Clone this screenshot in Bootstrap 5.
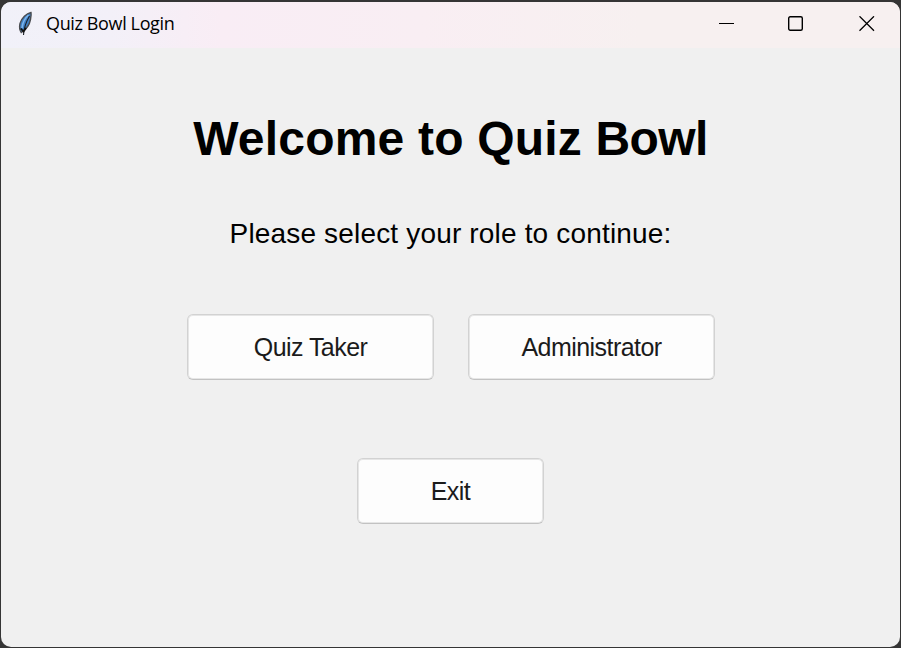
<!DOCTYPE html>
<html lang="en">
<head>
<meta charset="utf-8">
<meta name="viewport" content="width=device-width, initial-scale=1">
<title>Quiz Bowl Login</title>
<link href="https://cdn.jsdelivr.net/npm/bootstrap@5.3.0/dist/css/bootstrap.min.css" rel="stylesheet">
<style>
body { background: #353535; padding: 2px 1px 1px; font-family: "Liberation Sans", Arial, sans-serif; color: #000; }
.app-window { background: #f0f0f0; border-radius: 10px; }
.title-bar { height: 46px; padding: 0 0 3px 16px; background: linear-gradient(90deg, #f1f1f9 0, #f3f0f8 110px, #f9edf5 220px, #f9eef3 420px, #f7f0f0 640px); }
.title-text { font: 18px/24px "Open Sans", "Noto Sans", sans-serif; margin: 0 0 2px 12px; letter-spacing: -.37px; }
.caption-btns { margin-right: -2px; }
.caption-btn { width: 70px; height: 43px; }
.heading { font-size: 48px; line-height: 56px; margin-top: 63px; white-space: nowrap; letter-spacing: .2px; }
.heading-end { letter-spacing: -.6px; }
.prompt { font-size: 28px; line-height: 32px; margin-top: 51px; white-space: nowrap; letter-spacing: .17px; }
.role-row { gap: 34px; margin-top: 64px; padding-left: 1px; }
.tile-btn { width: 247px; height: 66px; padding: 0; background: #fdfdfd; border: 1px solid #d2d2d2; border-bottom-color: #c2c2c2; box-shadow: inset 0 0 0 1px #e6e6e6; border-radius: 6px; font-size: 25px; line-height: 30px; letter-spacing: -.55px; color: #1b1b1b; }
.tile-btn:hover { background: #fafafa; border-color: #c8c8c8; }
.exit-btn { width: 187px; margin-top: 78px; }
</style>
</head>
<body class="vh-100 overflow-hidden">
<div class="app-window h-100 d-flex flex-column overflow-hidden">
  <header class="title-bar d-flex align-items-center flex-shrink-0">
    <svg width="17" height="26" viewBox="0 0 17 26" aria-hidden="true">
      <path d="M14 1.5C9.500 2.500 4.500 7 3 12.500 2.200 16 2.500 19 4.300 21.500 9 18.500 12.500 14 13.500 8.500 14.200 5 14.300 3 14 1.500Z" fill="#3f7fc4" stroke="#4a4c50" stroke-width="1.4"/>
      <path d="M11.500 4C7.500 7.500 5.500 12 5 17" fill="none" stroke="#7db5ec" stroke-width="1.6"/>
      <path d="M12.500 5C9.500 10 7 15 6.500 24" fill="none" stroke="#1b1f26" stroke-width="1.1"/>
      <path d="M3.800 17.500 6.500 20.500 9 17" fill="none" stroke="#111" stroke-width="1.800"/>
    </svg>
    <span class="title-text">Quiz Bowl Login</span>
    <div class="caption-btns d-flex ms-auto">
      <button class="caption-btn btn p-0 border-0 rounded-0 d-flex align-items-center justify-content-center" aria-label="Minimize"><svg width="16" height="16"><path d="M0 7.5H15" stroke="#000" stroke-width="1"/></svg></button>
      <button class="caption-btn btn p-0 border-0 rounded-0 d-flex align-items-center justify-content-center" aria-label="Maximize"><svg width="16" height="16" overflow="visible"><rect x="-.3" y=".7" width="13.600" height="13.600" rx="1.500" fill="none" stroke="#000" stroke-width="1.400"/></svg></button>
      <button class="caption-btn btn p-0 border-0 rounded-0 d-flex align-items-center justify-content-center" aria-label="Close"><svg width="16" height="16"><path d="M.5.3 15 14.800M15 .3.5 14.800" stroke="#000" stroke-width="1.300"/></svg></button>
    </div>
  </header>
  <main class="flex-grow-1 d-flex flex-column align-items-center">
    <h1 class="heading fw-bold mb-0">Welcome to Quiz <span class="heading-end">Bowl</span></h1>
    <p class="prompt mb-0">Please select your role to continue:</p>
    <div class="role-row d-flex">
      <button class="btn tile-btn">Quiz Taker</button>
      <button class="btn tile-btn">Administrator</button>
    </div>
    <button class="btn tile-btn exit-btn">Exit</button>
  </main>
</div>
<script src="https://cdn.jsdelivr.net/npm/bootstrap@5.3.0/dist/js/bootstrap.bundle.min.js"></script>
</body>
</html>
